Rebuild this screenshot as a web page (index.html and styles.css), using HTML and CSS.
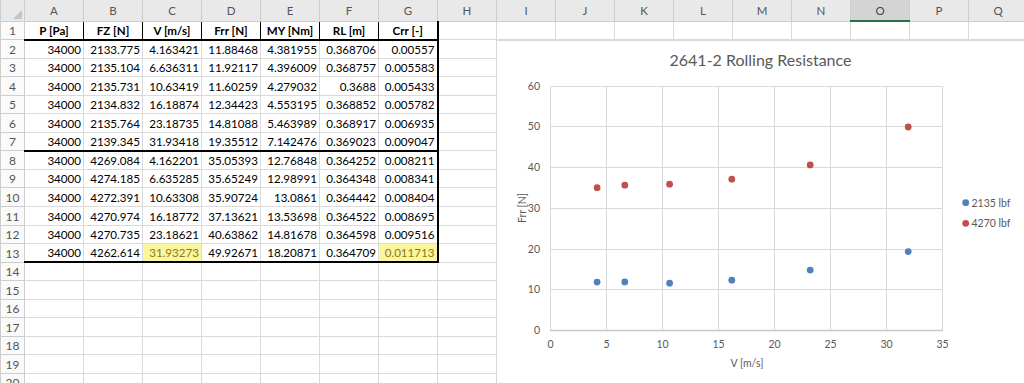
FILE: index.html
```html
<!DOCTYPE html>
<html lang="en">
<head>
    <meta charset="UTF-8">
    <meta name="viewport" content="width=device-width, initial-scale=1.0">
    <title>2641-2 Rolling Resistance</title>
    <link rel="stylesheet" href="styles.css">
</head>
<body>
    <div class="workbook">
        <table class="sheet">
            <colgroup>
                <col class="rh">
                <col span="17" class="cw">
            </colgroup>
            <thead>
                <tr>
                    <th class="corner"><span class="tri"></span></th>
                    <th>A</th><th>B</th><th>C</th><th>D</th><th>E</th><th>F</th><th>G</th><th>H</th>
                    <th>I</th><th>J</th><th>K</th><th>L</th><th>M</th><th>N</th><th class="sel">O</th><th>P</th><th>Q</th>
                </tr>
            </thead>
            <tbody>
                <tr class="hd">
                    <th>1</th>
                    <td>P [Pa]</td><td>FZ [N]</td><td>V [m/s]</td><td>Frr [N]</td><td>MY [Nm]</td><td>RL [m]</td><td>Crr [-]</td>
                    <td></td><td></td><td></td><td></td><td></td><td></td><td></td><td></td><td></td><td></td>
                </tr>
                <tr>
                    <th>2</th>
                    <td>34000</td><td>2133.775</td><td>4.163421</td><td>11.88468</td><td>4.381955</td><td>0.368706</td><td>0.00557</td>
                    <td></td><td></td><td></td><td></td><td></td><td></td><td></td><td></td><td></td><td></td>
                </tr>
                <tr>
                    <th>3</th>
                    <td>34000</td><td>2135.104</td><td>6.636311</td><td>11.92117</td><td>4.396009</td><td>0.368757</td><td>0.005583</td>
                    <td></td><td></td><td></td><td></td><td></td><td></td><td></td><td></td><td></td><td></td>
                </tr>
                <tr>
                    <th>4</th>
                    <td>34000</td><td>2135.731</td><td>10.63419</td><td>11.60259</td><td>4.279032</td><td>0.3688</td><td>0.005433</td>
                    <td></td><td></td><td></td><td></td><td></td><td></td><td></td><td></td><td></td><td></td>
                </tr>
                <tr>
                    <th>5</th>
                    <td>34000</td><td>2134.832</td><td>16.18874</td><td>12.34423</td><td>4.553195</td><td>0.368852</td><td>0.005782</td>
                    <td></td><td></td><td></td><td></td><td></td><td></td><td></td><td></td><td></td><td></td>
                </tr>
                <tr>
                    <th>6</th>
                    <td>34000</td><td>2135.764</td><td>23.18735</td><td>14.81088</td><td>5.463989</td><td>0.368917</td><td>0.006935</td>
                    <td></td><td></td><td></td><td></td><td></td><td></td><td></td><td></td><td></td><td></td>
                </tr>
                <tr class="end">
                    <th>7</th>
                    <td>34000</td><td>2139.345</td><td>31.93418</td><td>19.35512</td><td>7.142476</td><td>0.369023</td><td>0.009047</td>
                    <td></td><td></td><td></td><td></td><td></td><td></td><td></td><td></td><td></td><td></td>
                </tr>
                <tr>
                    <th>8</th>
                    <td>34000</td><td>4269.084</td><td>4.162201</td><td>35.05393</td><td>12.76848</td><td>0.364252</td><td>0.008211</td>
                    <td></td><td></td><td></td><td></td><td></td><td></td><td></td><td></td><td></td><td></td>
                </tr>
                <tr>
                    <th>9</th>
                    <td>34000</td><td>4274.185</td><td>6.635285</td><td>35.65249</td><td>12.98991</td><td>0.364348</td><td>0.008341</td>
                    <td></td><td></td><td></td><td></td><td></td><td></td><td></td><td></td><td></td><td></td>
                </tr>
                <tr>
                    <th>10</th>
                    <td>34000</td><td>4272.391</td><td>10.63308</td><td>35.90724</td><td>13.0861</td><td>0.364442</td><td>0.008404</td>
                    <td></td><td></td><td></td><td></td><td></td><td></td><td></td><td></td><td></td><td></td>
                </tr>
                <tr>
                    <th>11</th>
                    <td>34000</td><td>4270.974</td><td>16.18772</td><td>37.13621</td><td>13.53698</td><td>0.364522</td><td>0.008695</td>
                    <td></td><td></td><td></td><td></td><td></td><td></td><td></td><td></td><td></td><td></td>
                </tr>
                <tr>
                    <th>12</th>
                    <td>34000</td><td>4270.735</td><td>23.18621</td><td>40.63862</td><td>14.81678</td><td>0.364598</td><td>0.009516</td>
                    <td></td><td></td><td></td><td></td><td></td><td></td><td></td><td></td><td></td><td></td>
                </tr>
                <tr class="end">
                    <th>13</th>
                    <td>34000</td><td>4262.614</td><td class="hl">31.93273</td><td>49.92671</td><td>18.20871</td><td>0.364709</td><td class="hl">0.011713</td>
                    <td></td><td></td><td></td><td></td><td></td><td></td><td></td><td></td><td></td><td></td>
                </tr>
                <tr>
                    <th>14</th>
                    <td></td><td></td><td></td><td></td><td></td><td></td><td></td><td></td><td></td>
                    <td></td><td></td><td></td><td></td><td></td><td></td><td></td><td></td>
                </tr>
                <tr>
                    <th>15</th>
                    <td></td><td></td><td></td><td></td><td></td><td></td><td></td><td></td><td></td>
                    <td></td><td></td><td></td><td></td><td></td><td></td><td></td><td></td>
                </tr>
                <tr>
                    <th>16</th>
                    <td></td><td></td><td></td><td></td><td></td><td></td><td></td><td></td><td></td>
                    <td></td><td></td><td></td><td></td><td></td><td></td><td></td><td></td>
                </tr>
                <tr>
                    <th>17</th>
                    <td></td><td></td><td></td><td></td><td></td><td></td><td></td><td></td><td></td>
                    <td></td><td></td><td></td><td></td><td></td><td></td><td></td><td></td>
                </tr>
                <tr>
                    <th>18</th>
                    <td></td><td></td><td></td><td></td><td></td><td></td><td></td><td></td><td></td>
                    <td></td><td></td><td></td><td></td><td></td><td></td><td></td><td></td>
                </tr>
                <tr>
                    <th>19</th>
                    <td></td><td></td><td></td><td></td><td></td><td></td><td></td><td></td><td></td>
                    <td></td><td></td><td></td><td></td><td></td><td></td><td></td><td></td>
                </tr>
                <tr>
                    <th>20</th>
                    <td></td><td></td><td></td><td></td><td></td><td></td><td></td><td></td><td></td>
                    <td></td><td></td><td></td><td></td><td></td><td></td><td></td><td></td>
                </tr>
            </tbody>
        </table>

        <!-- scatter chart floating over I2:Q20 -->
        <div class="chart">
            <svg width="530" height="343" viewBox="0 0 530 343">
                <text class="chart-title" x="264.5" y="26" text-anchor="middle">2641-2 Rolling Resistance</text>

                <g class="grid">
                    <line x1="54.5" y1="46.5" x2="446.5" y2="46.5"/>
                    <line x1="54.5" y1="86.5" x2="446.5" y2="86.5"/>
                    <line x1="54.5" y1="127.5" x2="446.5" y2="127.5"/>
                    <line x1="54.5" y1="168.5" x2="446.5" y2="168.5"/>
                    <line x1="54.5" y1="209.5" x2="446.5" y2="209.5"/>
                    <line x1="54.5" y1="249.5" x2="446.5" y2="249.5"/>
                    <line x1="54.5" y1="46.5" x2="54.5" y2="290.5"/>
                    <line x1="110.5" y1="46.5" x2="110.5" y2="290.5"/>
                    <line x1="166.5" y1="46.5" x2="166.5" y2="290.5"/>
                    <line x1="222.5" y1="46.5" x2="222.5" y2="290.5"/>
                    <line x1="278.5" y1="46.5" x2="278.5" y2="290.5"/>
                    <line x1="334.5" y1="46.5" x2="334.5" y2="290.5"/>
                    <line x1="390.5" y1="46.5" x2="390.5" y2="290.5"/>
                    <line x1="446.5" y1="46.5" x2="446.5" y2="290.5"/>
                </g>
                <line class="axis" x1="54" y1="290.5" x2="447" y2="290.5"/>

                <g class="tick" text-anchor="end">
                    <text x="44" y="50">60</text>
                    <text x="44" y="90">50</text>
                    <text x="44" y="131">40</text>
                    <text x="44" y="172">30</text>
                    <text x="44" y="213">20</text>
                    <text x="44" y="253">10</text>
                    <text x="44" y="294">0</text>
                </g>
                <g class="tick" text-anchor="middle">
                    <text x="54.5" y="308">0</text>
                    <text x="110.5" y="308">5</text>
                    <text x="166.5" y="308">10</text>
                    <text x="222.5" y="308">15</text>
                    <text x="278.5" y="308">20</text>
                    <text x="334.5" y="308">25</text>
                    <text x="390.5" y="308">30</text>
                    <text x="446.5" y="308">35</text>
                </g>

                <text class="axis-title" x="251" y="326.5" text-anchor="middle">V [m/s]</text>
                <text class="axis-title" transform="translate(29.5 168) rotate(-90)" text-anchor="middle">Frr [N]</text>

                <g class="series-a">
                    <circle cx="101.1" cy="242.1" r="3.4"/>
                    <circle cx="128.8" cy="241.9" r="3.4"/>
                    <circle cx="173.6" cy="243.2" r="3.4"/>
                    <circle cx="235.8" cy="240.2" r="3.4"/>
                    <circle cx="314.2" cy="230.1" r="3.4"/>
                    <circle cx="412.2" cy="211.6" r="3.4"/>
                </g>
                <g class="series-b">
                    <circle cx="101.1" cy="147.7" r="3.4"/>
                    <circle cx="128.8" cy="145.2" r="3.4"/>
                    <circle cx="173.6" cy="144.2" r="3.4"/>
                    <circle cx="235.8" cy="139.2" r="3.4"/>
                    <circle cx="314.2" cy="124.9" r="3.4"/>
                    <circle cx="412.2" cy="87.0" r="3.4"/>
                </g>

                <g class="legend">
                    <circle class="dot-a" cx="469.7" cy="162.7" r="3.4"/>
                    <text x="475.5" y="166.5">2135 lbf</text>
                    <circle class="dot-b" cx="469.7" cy="183.3" r="3.4"/>
                    <text x="475.5" y="187">4270 lbf</text>
                </g>
            </svg>
        </div>
    </div>
</body>
</html>
```

FILE: styles.css
```css
body {
    margin: 0;
    background: #fff;
    font-family: Lato, "Noto Sans", sans-serif;
    overflow: hidden;
}
.workbook {
    position: relative;
    width: 1024px;
    height: 383px;
    overflow: hidden;
}

/* grid */
.sheet {
    border-collapse: collapse;
    table-layout: fixed;
    width: 1027px;
    font-size: 11.6px;
    color: #000;
}
.sheet col.rh {
    width: 24px;
}
.sheet col.cw {
    width: 59px;
}
.sheet tr {
    height: 18.55px;
}
.sheet td, .sheet th {
    border: 1px solid #dadada;
    padding: 0 2px;
    white-space: nowrap;
    overflow: hidden;
    text-align: right;
    vertical-align: bottom;
    line-height: 16px;
}
.sheet thead tr {
    height: 21px;
}
.sheet thead th {
    background: #e9e9e9;
    color: #555;
    font-weight: normal;
    font-size: 11.5px;
    text-align: center;
    vertical-align: middle;
    border-color: #cdcdcd;
    border-top: none;
    padding-top: 2px;
}
.sheet thead th.sel {
    background: #d4d4d4;
    color: #444;
    border-bottom: 2px solid #217346;
}
.sheet th.corner {
    text-align: right;
    vertical-align: bottom;
    padding: 0 2px 2px 0;
    line-height: 0;
}
.sheet .tri {
    display: inline-block;
    width: 0;
    height: 0;
    border-left: 9px solid transparent;
    border-bottom: 9px solid #c4c4c4;
}
.sheet tbody th {
    background: #fafafa;
    color: #555;
    font-weight: normal;
    font-size: 12px;
    text-align: center;
    border-color: #cdcdcd;
}

/* table block A1:G13 */
.sheet tr.hd td:nth-child(-n+8) {
    font-weight: bold;
    text-align: center;
    border-left: 1px solid #000;
    border-right: 1px solid #000;
    border-bottom: 2px solid #000;
}
.sheet tbody tr:nth-child(-n+13) td:nth-child(8) {
    border-right: 2px solid #000;
}
.sheet tr.end td:nth-child(-n+8) {
    border-bottom: 2px solid #000;
}
.sheet td.hl {
    background: #fbf6a0;
    color: #8c7a12;
}

/* chart */
.chart {
    position: absolute;
    left: 496px;
    top: 40px;
    width: 530px;
    height: 343px;
    background: #fff;
    border-left: 1px solid #d9d9d9;
    border-top: 1px solid #d9d9d9;
    box-sizing: border-box;
}
.chart svg {
    display: block;
    margin: -1px 0 0 -1px;
    font-family: Lato, "Noto Sans", sans-serif;
}
.chart-title {
    font-size: 16px;
    fill: #595959;
}
.grid line {
    stroke: #d9d9d9;
    stroke-width: 1;
}
.axis {
    stroke: #c8c8c8;
    stroke-width: 1.4;
}
.tick text {
    font-size: 10.5px;
    fill: #595959;
}
.axis-title {
    font-size: 10.5px;
    fill: #595959;
}
.series-a circle, .dot-a {
    fill: #4f81bd;
}
.series-b circle, .dot-b {
    fill: #c0504d;
}
.legend text {
    font-size: 10.5px;
    fill: #595959;
}
```
